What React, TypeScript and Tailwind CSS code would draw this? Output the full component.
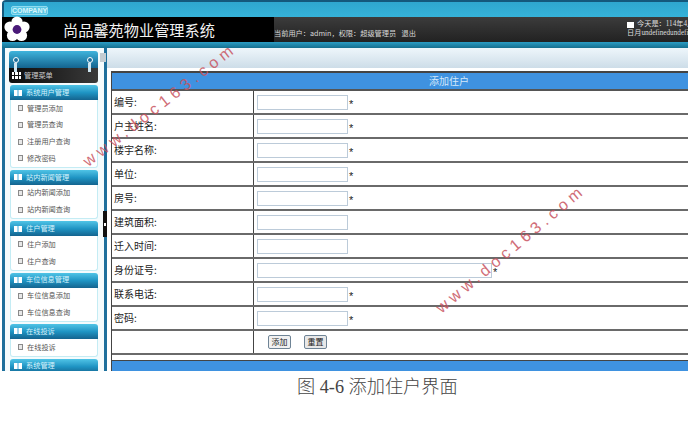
import React from "react";

const FORM_ROWS = [
  { label: "编号:", required: true },
  { label: "户主姓名:", required: true },
  { label: "楼宇名称:", required: true },
  { label: "单位:", required: true },
  { label: "房号:", required: true },
  { label: "建筑面积:", required: false },
  { label: "迁入时间:", required: false },
  { label: "身份证号:", required: true, wide: true },
  { label: "联系电话:", required: true },
  { label: "密码:", required: true },
];

const MENU_SECTIONS = [
  { title: "系统用户管理", items: ["管理员添加", "管理员查询", "注册用户查询", "修改密码"] },
  { title: "站内新闻管理", items: ["站内新闻添加", "站内新闻查询"] },
  { title: "住户管理", items: ["住户添加", "住户查询"] },
  { title: "车位信息管理", items: ["车位信息添加", "车位信息查询"] },
  { title: "在线投诉", items: ["在线投诉"] },
  { title: "系统管理", items: [] as string[] },
];

function Flower() {
  return (
    <svg width="26" height="26" viewBox="0 0 26 26">
      <g fill="#ffffff">
        <circle cx="13" cy="6" r="5.6" />
        <circle cx="20" cy="11" r="5.6" />
        <circle cx="17.5" cy="19.5" r="5.6" />
        <circle cx="8.5" cy="19.5" r="5.6" />
        <circle cx="6" cy="11" r="5.6" />
      </g>
      <circle cx="13" cy="13.5" r="4.4" fill="#4a1a78" />
    </svg>
  );
}

function Pin() {
  return (
    <div className="flex w-[7px] flex-col items-center">
      <div className="h-[6px] w-[6px] rounded-full border border-white bg-[#1d6f9c]" />
      <div className="h-[9px] w-[3px] bg-[#cfe6f2]" />
    </div>
  );
}

function MenuSection({ title, items }: { title: string; items: string[] }) {
  return (
    <div className="mb-[2px] shrink-0">
      <div className="flex h-[15px] items-center rounded-t-[3px] bg-gradient-to-b from-[#4fc4e6] via-[#1f95c4] to-[#14648f] pl-[4px]">
        <div className="mr-[4px] h-[6px] w-[8px] border-x-[3px] border-[#ffffff] bg-[#9fd4ee]" />
        <span className="text-[7.2px] leading-none text-[#d8f2fb]">{title}</span>
      </div>
      {items.length > 0 ? (
        <div className="rounded-b-[3px] border border-t-0 border-[#c4ecf4] bg-white">
          {items.map((item) => (
            <div key={item} className="flex h-[16.7px] items-center pl-[7px]">
              <div className="mr-[4px] h-[6px] w-[5px] border border-[#8a8a8a] bg-[#e8e8e8]" />
              <span className="text-[7.2px] leading-none text-[#555555]">{item}</span>
            </div>
          ))}
        </div>
      ) : null}
    </div>
  );
}

function Sidebar() {
  return (
    <div className="relative flex h-full w-[105px] shrink-0 flex-col overflow-hidden border-x-[3px] border-[#1d6f9c] bg-[#f4fbfd] pl-[4px] pr-[1px] pt-[3px]">
      <div className="relative flex h-[17px] w-[89px] shrink-0 justify-between rounded-t-[3px] bg-gradient-to-b from-[#3fb4dc] to-[#14648f] pl-[3px] pr-[5px] pt-[6px]">
        <div className="z-10"><Pin /></div>
        <div className="z-10"><Pin /></div>
      </div>
      <div className="mb-[2px] flex h-[15px] w-[89px] shrink-0 items-center rounded-b-[3px] bg-gradient-to-r from-[#0d0d0d] to-[#3a3a3a] pl-[3px]">
        <div className="mr-[3px] grid h-[7px] w-[9px] grid-cols-3 gap-[1px]">
          {[0, 1, 2, 3, 4, 5].map((cell) => (
            <div key={cell} className="bg-white" />
          ))}
        </div>
        <span className="text-[7.2px] leading-none text-[#cccccc]">管理菜单</span>
      </div>
      <div className="w-[89px] pl-[1px]">
        {MENU_SECTIONS.map((section) => (
          <MenuSection key={section.title} title={section.title} items={section.items} />
        ))}
      </div>
    </div>
  );
}

function Watermark({ className }: { className: string }) {
  return (
    <div className={`absolute font-['Liberation_Sans',sans-serif] text-[16px] leading-none tracking-[4.6px] whitespace-nowrap text-[#c9545f] opacity-85 ${className}`}>
      www.doc163.com
    </div>
  );
}

export default function App() {
  return (
    <div className="relative h-[421px] w-[688px] overflow-hidden bg-white font-['Noto_Sans_CJK_SC','Liberation_Sans',sans-serif]">
      {/* top banner */}
      <div className="ml-[2px] h-[48px] overflow-hidden rounded-tl-[4px] border-t-[2px] border-[#14587c] bg-gradient-to-b from-[#2ea6cf] to-[#45cdee]">
        <div className="flex h-[15px] items-center border-l-[2px] border-[#14587c] pl-[7px] pt-[1px]">
          <div className="flex h-[9px] w-[37px] items-center justify-center rounded-[2px] border border-[#8fdcf0] bg-[#5cc6e4] font-['Liberation_Sans',sans-serif] text-[7px] leading-none font-bold text-[#d6f5fb]">
            COMPANY
          </div>
        </div>
        <div className="flex h-[25px]">
          <div className="relative flex w-[272px] items-center bg-black">
            <div className="absolute left-[2px] top-[-1px]"><Flower /></div>
            <span className="ml-[61px] text-[15.2px] leading-none text-[#f2f2f2]">尚品馨苑物业管理系统</span>
          </div>
          <div className="flex flex-1 bg-gradient-to-b from-[#3c3c3c] to-[#222222]">
            <div className="flex w-[142px] items-end justify-between whitespace-nowrap pb-[4px] text-[7.2px] leading-[10px] text-[#d8d8d8]">
              <span>当前用户：admin，权限：超级管理员</span>
              <span>退出</span>
            </div>
            <div className="ml-[211px] w-[61px] whitespace-nowrap pt-[3px] font-['Liberation_Serif','Noto_Sans_CJK_SC',serif] text-[7.2px] leading-[9px] text-[#dddddd]">
              <div className="flex items-center">
                <span className="mr-[3px] h-[6px] w-[7px] shrink-0 bg-white" />
                今天是：114年4月
              </div>
              <div>日月undefinedundefined</div>
            </div>
          </div>
        </div>
        <div className="h-[6px] bg-gradient-to-b from-[#2a9cc4] to-[#16708f]" />
      </div>

      {/* main area */}
      <div className="ml-[2px] flex h-[323px]">
        <Sidebar />
        <div className="relative flex min-w-0 flex-1 flex-col bg-white">
          <div className="h-[20px] shrink-0 bg-gradient-to-b from-[#eef6fb] to-[#cddde8]" />
          <div className="ml-[4px] mt-[3px] w-[675px] flex-1 border-l border-t-2 border-[#444444]">
            <div className="flex h-[18px] items-center justify-center border-b-2 border-[#555555] bg-[#3f92e0] text-[10px] leading-none text-[#d4e8fa]">
              添加住户
            </div>
            {FORM_ROWS.map((row) => (
              <div key={row.label} className="flex h-[24px] border-b-2 border-[#6a6a6a]">
                <div className="flex w-[142px] items-center border-r border-[#444444] pl-[2px] text-[10px] leading-none text-[#222222]">
                  {row.label}
                </div>
                <div className="flex items-center pl-[3px]">
                  <input
                    readOnly
                    className={`h-[15px] border border-[#bccbd9] bg-white ${row.wide ? "w-[235px]" : "w-[91px]"}`}
                  />
                  {row.required ? (
                    <span className="ml-[1px] mt-[5px] font-['Liberation_Sans',sans-serif] text-[11px] leading-none text-[#222222]">*</span>
                  ) : null}
                </div>
              </div>
            ))}
            <div className="flex h-[24px] border-b-2 border-[#6a6a6a]">
              <div className="w-[142px] border-r border-[#444444]" />
              <div className="flex items-center gap-[13px] pl-[14px]">
                <button className="flex h-[14px] w-[23px] items-center justify-center rounded-[2px] border border-[#6f8496] bg-[#f1f1f1] text-[8px] leading-none text-[#222222]">添加</button>
                <button className="flex h-[14px] w-[23px] items-center justify-center rounded-[2px] border border-[#6f8496] bg-[#e8e8e8] text-[8px] leading-none text-[#222222]">重置</button>
              </div>
            </div>
            <div className="h-[5px]" />
            <div className="h-[11px] border-t border-[#444444] bg-[#3f92e0]" />
          </div>
        </div>
      </div>

      {/* sidebar collapse handle and strip tab */}
      <div className="absolute left-[100px] top-[53px] h-[9px] w-[6px] bg-[#c4ccd2]" />
      <div className="absolute left-[103px] top-[211px] flex h-[26px] w-[4px] items-center justify-center bg-[#111111]">
        <div className="h-[3px] w-[2px] bg-white" />
      </div>

      <div className="mt-[5px] pl-[297px] font-['Liberation_Serif','Noto_Sans_CJK_SC',serif] text-[18.2px] leading-[22px] font-light whitespace-nowrap text-[#444444]">
        图 4-6 添加住户界面
      </div>

      <Watermark className="left-[65px] top-[97px] -rotate-[38deg]" />
      <Watermark className="left-[416px] top-[241px] -rotate-[40deg]" />
    </div>
  );
}
